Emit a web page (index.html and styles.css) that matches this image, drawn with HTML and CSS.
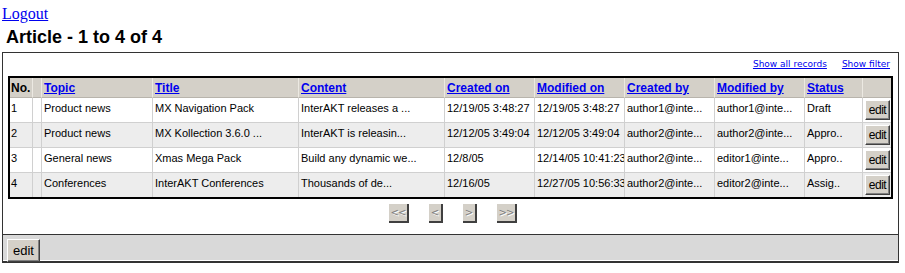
FILE: index.html
```html
<!DOCTYPE html>
<html lang="en">
<head>
    <meta charset="UTF-8">
    <title>Article list</title>
    <link rel="stylesheet" href="styles.css">
</head>
<body>

<div class="logout"><a href="#">Logout</a></div>
<h1 class="page-title">Article - 1 to 4 of 4</h1>

<div class="panel">
    <div class="panel-links">
        <a href="#">Show all records</a>
        <a href="#">Show filter</a>
    </div>

    <table class="grid">
        <colgroup>
            <col class="c-no">
            <col class="c-sel">
            <col class="c-topic">
            <col class="c-title">
            <col class="c-content">
            <col class="c-date">
            <col class="c-date">
            <col class="c-date">
            <col class="c-date">
            <col class="c-status">
            <col class="c-edit">
        </colgroup>
        <thead>
            <tr>
                <th>No.</th>
                <th></th>
                <th><a href="#">Topic</a></th>
                <th><a href="#">Title</a></th>
                <th><a href="#">Content</a></th>
                <th><a href="#">Created on</a></th>
                <th><a href="#">Modified on</a></th>
                <th><a href="#">Created by</a></th>
                <th><a href="#">Modified by</a></th>
                <th><a href="#">Status</a></th>
                <th></th>
            </tr>
        </thead>
        <tbody>
            <tr>
                <td>1</td>
                <td></td>
                <td>Product news</td>
                <td>MX Navigation Pack</td>
                <td>InterAKT releases a ...</td>
                <td>12/19/05 3:48:27</td>
                <td>12/19/05 3:48:27</td>
                <td>author1@inte...</td>
                <td>author1@inte...</td>
                <td>Draft</td>
                <td class="edit-cell"><button class="btn">edit</button></td>
            </tr>
            <tr>
                <td>2</td>
                <td></td>
                <td>Product news</td>
                <td>MX Kollection 3.6.0 ...</td>
                <td>InterAKT is releasin...</td>
                <td>12/12/05 3:49:04</td>
                <td>12/12/05 3:49:04</td>
                <td>author2@inte...</td>
                <td>author2@inte...</td>
                <td>Appro..</td>
                <td class="edit-cell"><button class="btn">edit</button></td>
            </tr>
            <tr>
                <td>3</td>
                <td></td>
                <td>General news</td>
                <td>Xmas Mega Pack</td>
                <td>Build any dynamic we...</td>
                <td>12/8/05</td>
                <td>12/14/05 10:41:23</td>
                <td>author2@inte...</td>
                <td>editor1@inte...</td>
                <td>Appro..</td>
                <td class="edit-cell"><button class="btn">edit</button></td>
            </tr>
            <tr>
                <td>4</td>
                <td></td>
                <td>Conferences</td>
                <td>InterAKT Conferences</td>
                <td>Thousands of de...</td>
                <td>12/16/05</td>
                <td>12/27/05 10:56:33</td>
                <td>author2@inte...</td>
                <td>editor2@inte...</td>
                <td>Assig..</td>
                <td class="edit-cell"><button class="btn">edit</button></td>
            </tr>
        </tbody>
    </table>

    <div class="pager">
        <span class="pager-btn wide">&lt;&lt;</span>
        <span class="pager-btn">&lt;</span>
        <span class="pager-btn">&gt;</span>
        <span class="pager-btn wide">&gt;&gt;</span>
    </div>

    <div class="panel-footer">
        <button class="btn btn-big">edit</button>
    </div>
</div>

</body>
</html>
```

FILE: styles.css
```css
body {
    margin: 0;
    font-family: "Liberation Serif", serif;
    background: white;
}
a {
    color: #0000ee;
}
.logout {
    padding: 5px 2px 0;
    font-size: 16px;
}
.page-title {
    margin: 4px 0 4px 6px;
    font-family: "Liberation Sans", Arial, sans-serif;
    font-size: 18px;
    line-height: 21px;
}
.panel {
    width: 897px;
    box-sizing: border-box;
    margin-left: 2px;
    border: 1px solid #333;
    border-bottom-width: 2px;
    padding-bottom: 1px;
    font-family: "Liberation Sans", Arial, sans-serif;
}
.panel-links {
    display: flex;
    justify-content: flex-end;
    gap: 15px;
    padding: 6px 8px 0 0;
    margin-bottom: 6px;
    font-family: "DejaVu Sans", Verdana, sans-serif;
    font-size: 9px;
    line-height: 11px;
}
.grid {
    width: 885px;
    margin-left: 5px;
    table-layout: fixed;
    border-collapse: separate;
    border-spacing: 0;
    border: 2px solid #000;
    font-size: 11px;
}
.c-no { width: 23px; }
.c-sel { width: 9px; }
.c-topic { width: 111px; }
.c-title { width: 146px; }
.c-content { width: 146px; }
.c-date { width: 90px; }
.c-status { width: 58px; }
.c-edit { width: 28px; }
.grid th,
.grid td {
    box-sizing: border-box;
    white-space: nowrap;
    overflow: hidden;
    text-align: left;
    border-right: 1px solid #d0d0d0;
    border-bottom: 1px solid #d0d0d0;
}
.grid th:last-child,
.grid td:last-child {
    border-right: none;
}
.grid th {
    height: 20px;
    padding: 1px 2px 0;
    background: #d4d0c8;
    font-size: 12px;
    font-weight: bold;
    vertical-align: middle;
    border-right-color: #ece9e2;
    border-bottom-color: #b8b4ac;
}
.grid th:first-child {
    padding-left: 1px;
}
.grid td {
    height: 25px;
    padding: 4px 2px 0;
    vertical-align: top;
    line-height: 13px;
}
.grid td:first-child {
    padding-left: 1px;
}
.grid tbody tr:nth-child(even) td {
    background: #ededed;
}
.grid tbody tr:last-child td {
    height: 24px;
    border-bottom: none;
}
.grid td.edit-cell {
    padding: 2px 0 0 2px;
}
.btn {
    box-sizing: border-box;
    width: 25px;
    height: 20px;
    padding: 0;
    background: #d4d0c8;
    border: 1px solid;
    border-color: #fff #404040 #404040 #fff;
    box-shadow: inset -1px -1px 0 #808080;
    font-family: "Liberation Sans", Arial, sans-serif;
    font-size: 12px;
    letter-spacing: -0.5px;
    color: #000;
}
.btn-big {
    width: 33px;
    height: 23px;
    font-size: 13px;
    letter-spacing: 0;
}
.pager {
    display: flex;
    justify-content: center;
    gap: 20px;
    padding-left: 5px;
    margin: 5px 0 11px;
}
.pager-btn {
    box-sizing: border-box;
    width: 14px;
    height: 19px;
    display: flex;
    align-items: center;
    justify-content: center;
    background: #d4d0c8;
    border-right: 2px solid #404040;
    border-bottom: 2px solid #404040;
    font-family: "DejaVu Sans", Verdana, sans-serif;
    font-size: 10px;
    color: #808080;
    text-shadow: 1px 1px 0 #fff;
}
.pager-btn.wide {
    width: 20px;
    letter-spacing: -1px;
}
.panel-footer {
    height: 26px;
    box-sizing: border-box;
    border-top: 1px solid #333;
    background: #d9d9d9;
    padding: 4px 0 0 4px;
}
```
